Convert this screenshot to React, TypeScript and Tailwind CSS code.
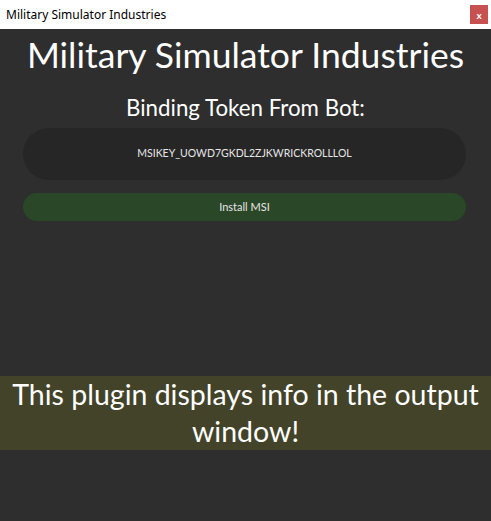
export default function App() {
  return (
    <div className="flex h-[521px] w-[491px] flex-col bg-[#2e2e2e] font-['Lato','Open_Sans',sans-serif]">
      {/* title bar */}
      <div className="flex h-[29px] shrink-0 items-center justify-between bg-white pl-[6px] pr-[3px]">
        <span className="font-['Noto_Sans','Liberation_Sans',sans-serif] text-[12px] text-black">
          Military Simulator Industries
        </span>
        <button className="flex h-[19px] w-[18px] items-center justify-center bg-[#c75050] text-[10px] font-bold leading-none text-white">
          x
        </button>
      </div>

      <div className="flex flex-1 flex-col">
        <h1 className="mt-[4px] text-center text-[35.5px] leading-[44px] text-white">
          Military Simulator Industries
        </h1>
        <h2 className="mt-[17px] text-center text-[22.3px] leading-[28px] text-white">
          Binding Token From Bot:
        </h2>
        <div className="ml-[23px] mr-[25px] mt-[6px] flex h-[52px] items-center justify-center rounded-full bg-[#262626] text-[10.5px] text-[#e6e6e6]">
          MSIKEY_UOWD7GKDL2ZJKWRICKROLLLOL
        </div>
        <button className="ml-[23px] mr-[25px] mt-[13px] flex h-[28px] items-center justify-center rounded-full bg-[#2a4728] text-[11px] text-[#e6e6e6]">
          Install MSI
        </button>

        <div className="mt-[155px] bg-[#43432a] px-2 text-center text-[28.5px] leading-[37px] text-white">
          This plugin displays info in the output window!
        </div>
      </div>
    </div>
  );
}
